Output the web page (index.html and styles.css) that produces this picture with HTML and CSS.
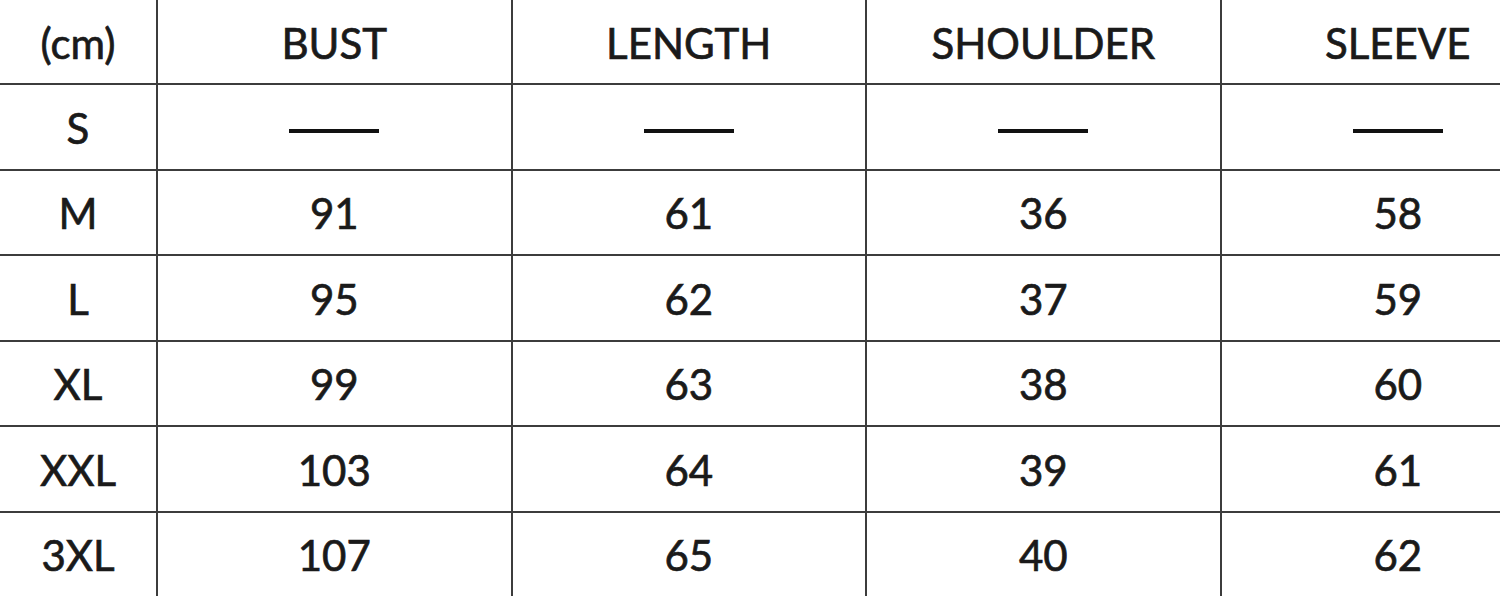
FILE: index.html
```html
<!DOCTYPE html>
<html>
<head>
<meta charset="utf-8">
<link rel="stylesheet" href="styles.css">
</head>
<body>
<div class="chart">
  <div class="cell">(cm)</div><div class="cell">BUST</div><div class="cell">LENGTH</div><div class="cell">SHOULDER</div><div class="cell last">SLEEVE</div>
  <div class="cell">S</div><div class="cell"><span class="dash"></span></div><div class="cell"><span class="dash"></span></div><div class="cell"><span class="dash"></span></div><div class="cell last"><span class="dash"></span></div>
  <div class="cell">M</div><div class="cell">91</div><div class="cell">61</div><div class="cell">36</div><div class="cell last">58</div>
  <div class="cell">L</div><div class="cell">95</div><div class="cell">62</div><div class="cell">37</div><div class="cell last">59</div>
  <div class="cell">XL</div><div class="cell">99</div><div class="cell">63</div><div class="cell">38</div><div class="cell last">60</div>
  <div class="cell">XXL</div><div class="cell">103</div><div class="cell">64</div><div class="cell">39</div><div class="cell last">61</div>
  <div class="cell">3XL</div><div class="cell">107</div><div class="cell">65</div><div class="cell">40</div><div class="cell last">62</div>
</div>
</body>
</html>
```
FILE: styles.css
```css
html, body {
  margin: 0;
  padding: 0;
  background: #fff;
  overflow: hidden;
  width: 1500px;
  height: 596px;
}
.chart {
  display: grid;
  grid-template-columns: 158px repeat(3, 354.5px) 1fr;
  grid-template-rows: 85px repeat(6, 85.5px);
  width: 1500px;
  font-family: "Lato", "Liberation Sans", sans-serif;
  font-size: 42px;
  color: #1a1a1a;
  -webkit-text-stroke: 0.7px #1a1a1a;
}
.cell {
  display: flex;
  align-items: center;
  justify-content: center;
  border-right: 2px solid #3c3c3c;
  border-bottom: 2px solid #3c3c3c;
  padding-top: 2px;
  box-sizing: border-box;
  overflow: hidden;
}
.cell.last {
  border-right: none;
  padding-left: 74px;
}
.dash {
  display: block;
  width: 90px;
  height: 4px;
  background: #111;
  margin-top: 6px;
}
```
